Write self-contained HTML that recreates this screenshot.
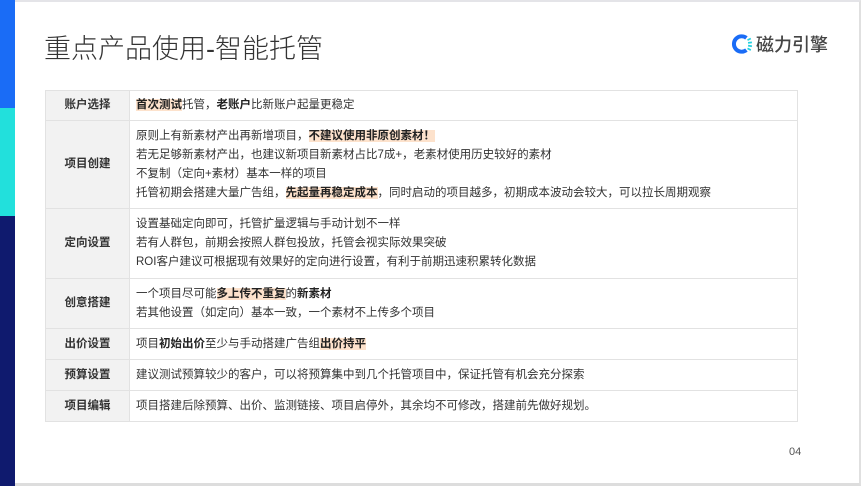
<!DOCTYPE html>
<html><head><meta charset="utf-8"><style>
*{margin:0;padding:0;box-sizing:border-box}
body{width:861px;height:486px;overflow:hidden;background:#fff;position:relative;font-family:"Liberation Sans","Noto Sans CJK SC",sans-serif;color:#333}
.bar{position:absolute;left:0;width:15px}
.frame{position:absolute;left:15px;top:0;right:0;bottom:0;border-top:2px solid #e4e4e8;border-right:2px solid #e0e0e0;border-bottom:3px solid #ddd}
h1{position:absolute;left:44px;top:27px;font-size:27px;font-weight:300;color:#333;letter-spacing:0}
.logo{position:absolute;left:731px;top:31px;font-size:18px;color:#444;font-weight:500;display:flex;align-items:center}
table{position:absolute;left:45px;top:90px;width:753px;border-collapse:collapse;font-size:11.5px}
td{border:1px solid #e2e2e2;padding:0 6px;line-height:19px;vertical-align:middle}
td.l{width:84px;background:#f2f2f2;text-align:center;font-weight:bold;color:#333}
b{font-weight:bold;color:#222}
.h{background:#fde2cc}
.pg{position:absolute;left:789px;top:446px;font-size:11px;color:#555}
</style></head><body>
<div class="bar" style="top:0;height:108px;background:#1a6cf6"></div>
<div class="bar" style="top:108px;height:108px;background:#22e0dc"></div>
<div class="bar" style="top:216px;height:270px;background:#0f1a6e"></div>
<div class="frame"></div>
<h1>重点产品使用-智能托管</h1>
<div class="logo"><svg width="22" height="22" viewBox="0 0 20 20"><path d="M14 4.5A7 7 0 1 0 14 15.5" fill="none" stroke="#1a6cf6" stroke-width="3.6"/><g stroke="#22d0e0" stroke-width="1.6"><line x1="15" y1="6.5" x2="18" y2="5"/><line x1="15.5" y1="9" x2="19" y2="8.5"/><line x1="15.5" y1="11.5" x2="19" y2="12"/><line x1="15" y1="14" x2="18" y2="15.5"/></g></svg><span style="margin-left:3px">磁力引擎</span></div>
<table>
<tr style="height:30px"><td class="l">账户选择</td><td><b class="h">首次测试</b>托管，<b>老账户</b>比新账户起量更稳定</td></tr>
<tr style="height:88px"><td class="l">项目创建</td><td>原则上有新素材产出再新增项目，<b class="h">不建议使用非原创素材！</b><br>若无足够新素材产出，也建议新项目新素材占比7成+，老素材使用历史较好的素材<br>不复制（定向+素材）基本一样的项目<br>托管初期会搭建大量广告组，<b class="h">先起量再稳定成本</b>，同时启动的项目越多，初期成本波动会较大，可以拉长周期观察</td></tr>
<tr style="height:70px"><td class="l">定向设置</td><td>设置基础定向即可，托管扩量逻辑与手动计划不一样<br>若有人群包，前期会按照人群包投放，托管会视实际效果突破<br>ROI客户建议可根据现有效果好的定向进行设置，有利于前期迅速积累转化数据</td></tr>
<tr style="height:50px"><td class="l">创意搭建</td><td>一个项目尽可能<b class="h">多上传不重复</b>的<b>新素材</b><br>若其他设置（如定向）基本一致，一个素材不上传多个项目</td></tr>
<tr style="height:31px"><td class="l">出价设置</td><td>项目<b>初始出价</b>至少与手动搭建广告组<b class="h">出价持平</b></td></tr>
<tr style="height:31px"><td class="l">预算设置</td><td>建议测试预算较少的客户，可以将预算集中到几个托管项目中，保证托管有机会充分探索</td></tr>
<tr style="height:31px"><td class="l">项目编辑</td><td>项目搭建后除预算、出价、监测链接、项目启停外，其余均不可修改，搭建前先做好规划。</td></tr>
</table>
<div class="pg">04</div>
</body></html>
